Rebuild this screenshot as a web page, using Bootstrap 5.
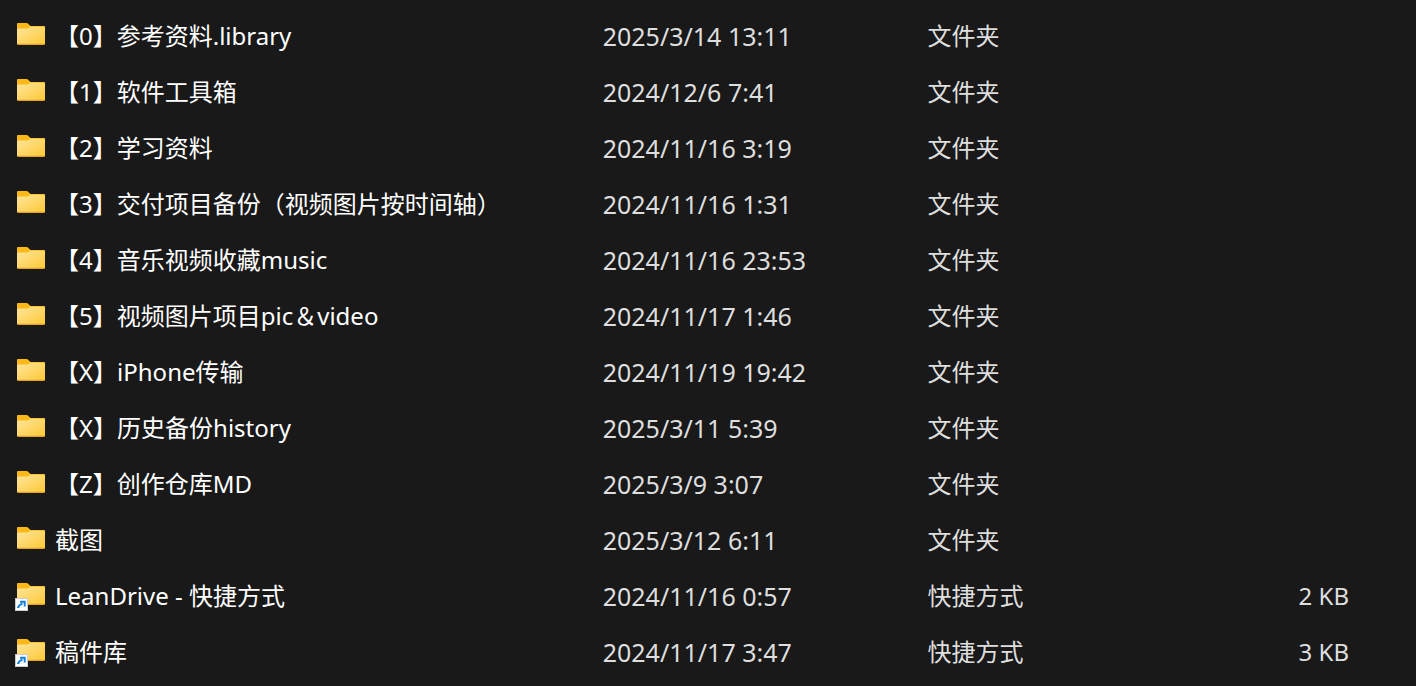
<!DOCTYPE html>
<html lang="zh-CN">
<head>
<meta charset="utf-8">
<meta name="viewport" content="width=device-width, initial-scale=1">
<title>文件列表</title>
<link href="https://cdn.jsdelivr.net/npm/bootstrap@5.3.0/dist/css/bootstrap.min.css" rel="stylesheet">
<style>
  body {
    background: #191919;
    color: #dedede;
    font-family: "Noto Sans", "Noto Sans CJK SC", sans-serif;
    font-size: 24px;
    line-height: 32px;
  }
  .files { table-layout: fixed; }
  .files td { height: 56px; padding: 0 0 0 7px; white-space: nowrap; }
  .files td.name { padding-left: 15px; }
  .files td.date { padding-left: 8px; font-size: 25px; line-height: 30px; }
  .files td.size { padding-right: 67px; }
  .c-name { width: 42%; }
  .c-date { width: 23%; }
  .c-type { width: 15%; }
</style>
</head>
<body>
<svg class="position-absolute" width="0" height="0" aria-hidden="true">
  <defs>
    <linearGradient id="front" x1="0" y1="0" x2="1" y2="1">
      <stop offset="0" stop-color="#ffe69c"/>
      <stop offset="1" stop-color="#ffc937"/>
    </linearGradient>
  </defs>
</svg>
<main class="pt-2">
  <table class="files w-100 align-middle">
    <colgroup><col class="c-name"><col class="c-date"><col class="c-type"><col></colgroup>
    <tbody id="rows"></tbody>
  </table>
</main>
<script src="https://cdn.jsdelivr.net/npm/bootstrap@5.3.0/dist/js/bootstrap.bundle.min.js"></script>
<script>
  const files = [
    ["【0】参考资料.library", "2025/3/14 13:11"],
    ["【1】软件工具箱", "2024/12/6 7:41"],
    ["【2】学习资料", "2024/11/16 3:19"],
    ["【3】交付项目备份（视频图片按时间轴）", "2024/11/16 1:31"],
    ["【4】音乐视频收藏music", "2024/11/16 23:53"],
    ["【5】视频图片项目pic＆video", "2024/11/17 1:46"],
    ["【X】iPhone传输", "2024/11/19 19:42"],
    ["【X】历史备份history", "2025/3/11 5:39"],
    ["【Z】创作仓库MD", "2025/3/9 3:07"],
    ["截图", "2025/3/12 6:11"],
    ["LeanDrive - 快捷方式", "2024/11/16 0:57", "2 KB"],
    ["稿件库", "2024/11/17 3:47", "3 KB"]
  ];
  const folder = `
    <path d="M2 2a1 1 0 0 1 1-1h8.500q1 0 1.700.8L15.500 4H29a1 1 0 0 1 1 1v6H2z" fill="#fbb917"/>
    <path d="M2 22V7.500q0-.9.9-.9h9.300q.8 0 1.400-.6l1.200-1.200H29.500q.5 0 .5.700V22z" fill="url(#front)"/>
    <path d="M2 21.800h28q0 1.200-1.200 1.200H3.200Q2 23 2 21.800z" fill="#e3a325"/>`;
  const arrow = `
    <rect x="0.500" y="16.500" width="12" height="12" fill="#fff" stroke="#c9cdd1"/>
    <path d="M3 26q.3-2.800 4.500-4.700M5 19.800h4.700v4.700" fill="none" stroke="#1683d8" stroke-width="2"/>`;
  document.getElementById("rows").innerHTML = files.map(([name, date, size]) => `
    <tr>
      <td class="name"><a href="#" class="d-flex align-items-center gap-2 text-white text-decoration-none">
        <svg width="32" height="32" viewBox="0 -2 32 32" class="flex-shrink-0" aria-hidden="true">${folder}${size ? arrow : ""}</svg>
        <span>${name}</span></a></td>
      <td class="date">${date}</td>
      <td>${size ? "快捷方式" : "文件夹"}</td>
      <td class="size text-end">${size || ""}</td>
    </tr>`).join("");
</script>
</body>
</html>
